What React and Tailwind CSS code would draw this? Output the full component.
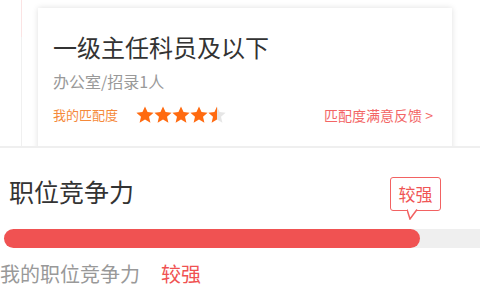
import React from 'react';

function Star({ fill = 1 }) {
  const id = `half-${fill}`;
  return (
    <svg width="18" height="18" viewBox="1 1 22 22">
      <defs>
        <linearGradient id={id} x1="0" x2="1" y1="0" y2="0">
          <stop offset={fill} stopColor="#ff6a10" />
          <stop offset={fill} stopColor="#e6e6e6" />
        </linearGradient>
      </defs>
      <path
        d="M12 1.5l3.1 6.9 7.4.7-5.6 5 1.7 7.4L12 17.6l-6.6 3.9 1.7-7.4-5.6-5 7.4-.7z"
        fill={`url(#${id})`}
      />
    </svg>
  );
}

export default function App() {
  const font = { fontFamily: '"Noto Sans CJK SC", "Noto Sans", sans-serif' };
  return (
    <div className="w-[480px] h-[293px] bg-white overflow-hidden" style={font}>
      {/* Carousel strip */}
      <div className="relative h-[146px] overflow-hidden">
        <div className="absolute left-[21px] top-0 w-px h-[37px] bg-[#fbe3e3]" />
        <div className="absolute left-[21px] top-[37px] w-px h-[120px] bg-[#f0f0f0]" />
        <div className="ml-[38px] mt-[8px] w-[414px] h-[160px] bg-white shadow-[0_0_6px_rgba(0,0,0,0.13)] pl-[15px] pr-[19px] pt-[23px]">
          <h1 className="text-[24px] leading-[32px] text-[#333]">一级主任科员及以下</h1>
          <p className="mt-[7px] text-[16px] leading-[22px] text-[#999]">办公室/招录1人</p>
          <div className="mt-[14px] flex items-center justify-between">
            <div className="flex items-center">
              <span className="text-[13px] leading-[18px] text-[#f5893a]">我的匹配度</span>
              <div className="ml-[18px] flex">
                <Star />
                <Star />
                <Star />
                <Star />
                <Star fill={0.5} />
              </div>
            </div>
            <span className="text-[14px] leading-[18px] text-[#f36565]">匹配度满意反馈 &gt;</span>
          </div>
        </div>
      </div>
      <div className="h-[2px] bg-[#efefef]" />

      {/* Competitiveness */}
      <div className="relative">
        <div className="flex items-start justify-between pt-[27px]">
          <h2 className="ml-[9px] mt-[1px] text-[25px] leading-[30px] text-[#333]">职位竞争力</h2>
          <div className="relative mr-[39px] mt-[2px] w-[51px] h-[34px] border-[1.5px] border-[#f26262] rounded-[3px] flex items-center justify-center bg-white">
            <span className="text-[17px] leading-[20px] text-[#f05555]">较强</span>
            <svg className="absolute left-[16px] -bottom-[10px]" width="12" height="11" viewBox="0 0 12 11">
              <path d="M0 0.5 L3 10 L10 0.5" fill="white" stroke="#f26262" strokeWidth="1.5" />
            </svg>
          </div>
        </div>
        <div className="mt-[18px] ml-[4px] h-[19px] bg-[#efefef] rounded-l-full">
          <div className="h-full w-[416px] bg-[#f05252] rounded-full" />
        </div>
        <div className="mt-[14px] flex items-center text-[20px] leading-[24px]">
          <span className="text-[#999]">我的职位竞争力</span>
          <span className="ml-[21px] text-[#f05252]">较强</span>
        </div>
      </div>
    </div>
  );
}
